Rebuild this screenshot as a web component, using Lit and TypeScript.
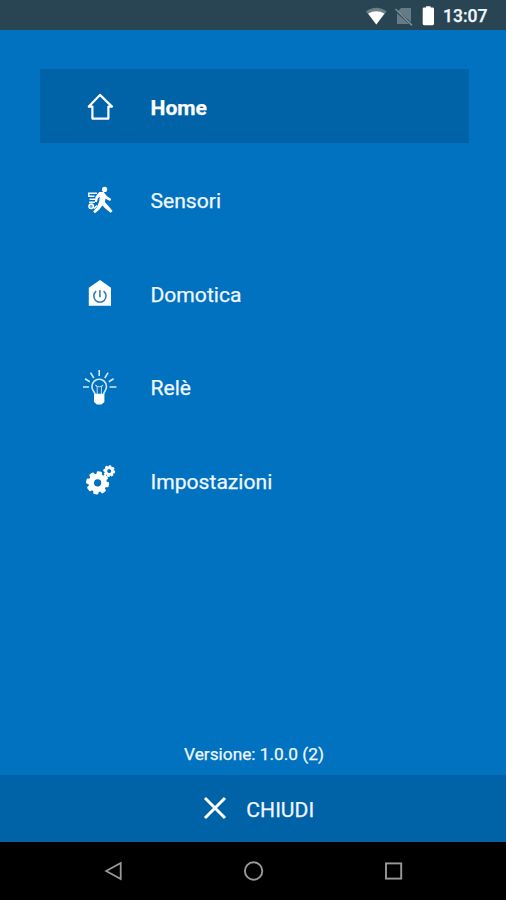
import { LitElement, html, svg, css } from "lit";
import { customElement } from "lit/decorators.js";
import { classMap } from "lit/directives/class-map.js";

const gear = (cx: number, cy: number, r: number, hole: number, tooth: number, turn: number) => svg`
  <g transform="translate(${cx} ${cy}) rotate(${turn})">
    <circle r=${(r * 0.8 + hole) / 2} fill="none" stroke="#fff" stroke-width=${r * 0.8 - hole}></circle>
    ${[0, 45, 90, 135, 180, 225, 270, 315].map(
      (a) => svg`<rect x=${-tooth / 2} y=${-r} width=${tooth} height=${r * 0.35} rx=${tooth * 0.25} fill="#fff" transform="rotate(${a})"></rect>`
    )}
  </g>`;

const icons = {
  home: svg`<path d="M20 7.9 8.8 19.6H12.4V31.6H28.4V19.6H32L20 7.9Z" fill="none" stroke="#fff" stroke-width="2.2" stroke-linejoin="round"/>`,
  sensors: svg`
    <circle cx="24.6" cy="9.4" r="2.6" fill="#fff"/>
    <path d="M19.2 12 23.8 12 26.4 15.8 31.2 19 30.1 21 25.4 18.8 24.9 22 28.6 26.3 32.6 31 30.6 32.8 25.6 28.8 22.4 25.4 19.4 29.4 15 33.2 13.2 31.6 17.2 26.8 19.2 21.5 19.8 16.4 17.8 18.6 17 22.2 14.8 21.8 15.6 16.4Z" fill="#fff"/>
    <g fill="none" stroke="#fff" stroke-width="1.4">
      <path d="M8.8 13.3H17M8.8 12.6V16.3H14.5M9.5 19.3H15.5M9 22.3H15"/>
      <circle cx="11.2" cy="26.3" r="2.3" fill="#fff" fill-opacity=".45"/>
      <path d="M14 28.5 17 25.5"/>
    </g>`,
  domotics: svg`
    <path d="M20 6 31 13.8V31.8H8.8V13.8Z" fill="#fff"/>
    <path d="M16.2 17.2A6.1 6.1 0 1 0 23.6 17.2M19.9 16V23.2" fill="none" stroke="#2a78bd" stroke-width="1.5"/>`,
  relay: svg`
    <g fill="none" stroke="#d4e8fb" stroke-width="1.6">
      <path d="M19.2 3V9M3 20H9M29.6 20H36.4M10.5 5.6 13.8 11M28.1 5.6 24.8 11M5 11.8 9.8 14.8M33.6 11.8 28.8 14.8"/>
      <path d="M15 27.3C14.8 24.6 11.9 23.4 11.9 19.5A7.3 7.3 0 0 1 26.5 19.5C26.5 23.4 23.8 24.6 23.6 27.3"/>
      <path d="M17.2 27V20L15.4 17.8M21.4 27V20L23 17.8M15.6 18.2Q19.3 21.4 23 18.2" stroke-width=".9"/>
    </g>
    <path d="M14 26.8H24.4V35L22.6 36.4 21.6 37.6H16.8L15.8 36.4 14 35Z" fill="#fff"/>`,
  settings: svg`${gear(17.6, 21.9, 11.5, 3.6, 5.4, 10)}${gear(29.2, 10.1, 5.9, 2, 2.8, 10)}`,
};

const items = [
  { label: "Home", icon: icons.home, active: true },
  { label: "Sensori", icon: icons.sensors, active: false },
  { label: "Domotica", icon: icons.domotics, active: false },
  { label: "Relè", icon: icons.relay, active: false },
  { label: "Impostazioni", icon: icons.settings, active: false },
];

@customElement("app-root")
export class AppRoot extends LitElement {
  static styles = css`
    :host {
      display: flex;
      flex-direction: column;
      height: 900px;
      background: #0072bf;
      color: #f1f7ff;
      font-family: Roboto, sans-serif;
      -webkit-text-stroke: 0.25px currentColor;
    }
    svg { display: block; flex: none; }
    .status {
      display: flex;
      align-items: center;
      justify-content: flex-end;
      height: 30px;
      box-sizing: border-box;
      padding: 2px 18.5px 0 0;
      background: #294553;
      font-size: 17.5px;
      font-weight: 500;
    }
    .status svg { margin-right: 7px; }
    .menu {
      display: flex;
      flex-direction: column;
      gap: 19.6px;
      padding: 39px 37.5px 0 40px;
      flex: 1;
    }
    .item {
      display: flex;
      align-items: center;
      gap: 30.5px;
      height: 74px;
      box-sizing: border-box;
      padding: 1px 0 0 40px;
      font-size: 21.1px;
    }
    .item span { padding-top: 1px; }
    .item.active { background: #0062a7; font-weight: 700; color: #fff; }
    .version {
      text-align: center;
      font-size: 17.3px;
      line-height: 20px;
      padding: 0 0 11px 2px;
    }
    .close {
      display: flex;
      align-items: center;
      justify-content: center;
      gap: 19.5px;
      height: 67px;
      box-sizing: border-box;
      background: #0062a7;
      font-size: 21.1px;
      padding: 1px 0 0 11px;
    }
    .close svg { margin-top: -2px; }
    .nav {
      display: flex;
      justify-content: center;
      gap: 116px;
      align-items: center;
      height: 58px;
      padding-left: 1px;
      background: #000;
    }
  `;

  render() {
    return html`
      <div class="status">
        <svg width="71" height="24" viewBox="0 0 71 24">
          <path d="M1 7.5Q11.3 0 21.6 7.5L11.3 20.5Z" fill="#6d808a"/>
          <path d="M3.1 9.6Q11.3 4.9 19.5 9.6L11.3 20.5Z" fill="#fff"/>
          <path d="M36 4H46V18L33 7Z M32 9.2 44 20H32Z" fill="#667b85"/>
          <path d="M30.5 5 47 21.4" stroke="#7c8e97" stroke-width="1.5"/>
          <path d="M60.3 3.4H61V2.2H65.6V3.4H67.6Q69 3.4 69 4.8V19.8Q69 21.2 67.6 21.2H59.1Q57.7 21.2 57.7 19.8V4.8Q57.7 3.4 59 3.4Z" fill="#fff"/>
        </svg>
        <span>13:07</span>
      </div>
      <nav class="menu">
        ${items.map(
          (i) => html`<div class=${classMap({ item: true, active: i.active })}>
            <svg width="40" height="40" viewBox="0 0 40 40">${i.icon}</svg>
            <span>${i.label}</span>
          </div>`
        )}
      </nav>
      <div class="version">Versione: 1.0.0 (2)</div>
      <div class="close">
        <svg width="24" height="24" viewBox="0 0 24 24">
          <path d="M2 2 22 22M22 2 2 22" stroke="#fff" stroke-width="3"/>
        </svg>
        <span>CHIUDI</span>
      </div>
      <div class="nav">
        <svg width="24" height="24" viewBox="0 0 24 24"><path d="M4.2 12 18.7 4V20Z" fill="none" stroke="#999" stroke-width="1.8"/></svg>
        <svg width="24" height="24" viewBox="0 0 24 24"><circle cx="11.6" cy="12" r="8.7" fill="none" stroke="#999" stroke-width="1.9"/></svg>
        <svg width="24" height="24" viewBox="0 0 24 24"><rect x="4" y="4.4" width="15.2" height="15.2" fill="none" stroke="#999" stroke-width="1.9"/></svg>
      </div>
    `;
  }
}
